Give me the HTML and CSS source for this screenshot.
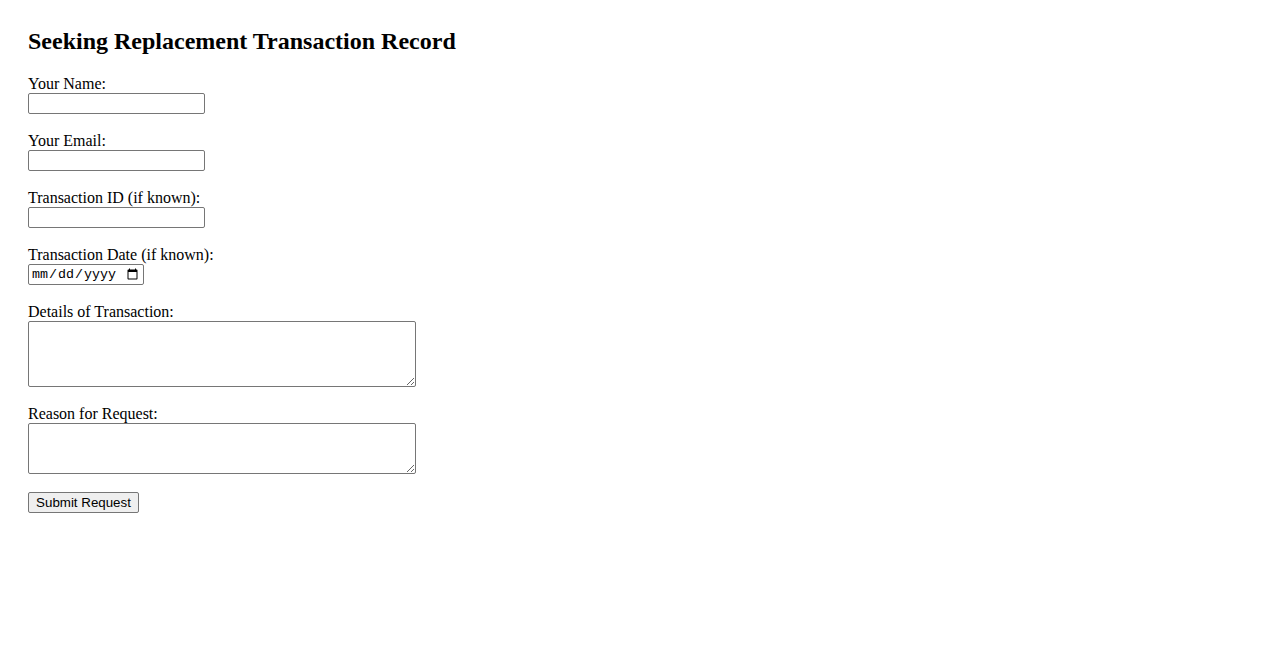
FILE: index.html
```html
<!DOCTYPE html>
<html lang="en">
<head>
<meta charset="utf-8">
<title>Seeking Replacement Transaction Record</title>
<link rel="stylesheet" href="styles.css">
</head>
<body>
<div class="page">
  <h2 class="title">Seeking Replacement Transaction Record</h2>
  <form class="form">
    <div class="field">
      <label class="label" for="name">Your Name:</label>
      <input class="text-input" type="text" id="name">
    </div>
    <div class="field">
      <label class="label" for="email">Your Email:</label>
      <input class="text-input" type="email" id="email">
    </div>
    <div class="field">
      <label class="label" for="tid">Transaction ID (if known):</label>
      <input class="text-input" type="text" id="tid">
    </div>
    <div class="field">
      <label class="label" for="tdate">Transaction Date (if known):</label>
      <input class="date-input" type="date" id="tdate">
    </div>
    <div class="field">
      <label class="label" for="details">Details of Transaction:</label>
      <textarea class="area area-tall" id="details"></textarea>
    </div>
    <div class="field">
      <label class="label" for="reason">Reason for Request:</label>
      <textarea class="area area-short" id="reason"></textarea>
    </div>
    <div class="field">
      <button class="submit" type="submit">Submit Request</button>
    </div>
  </form>
</div>
</body>
</html>
```
FILE: styles.css
```css
html, body {
  margin: 0;
  padding: 0;
  background: #ffffff;
}
.page {
  padding: 28px;
  font-family: "Liberation Serif", "Times New Roman", serif;
  font-size: 16px;
  color: #000000;
}
.title {
  margin: 0 0 21px 0;
  font-size: 24px;
  line-height: 26px;
  font-weight: bold;
}
.form {
  margin: 0;
}
.field {
  display: flex;
  flex-direction: column;
  align-items: flex-start;
  margin-bottom: 18px;
}
.label {
  display: block;
  line-height: 18px;
  height: 18px;
}
.text-input,
.date-input,
.area {
  box-sizing: border-box;
  margin: 0;
  border: 1px solid #767676;
  border-radius: 2px;
  background: #ffffff;
}
.text-input {
  width: 177px;
  height: 21px;
  padding: 1px 2px;
  font-family: "Liberation Sans", Arial, sans-serif;
  font-size: 13.333px;
}
.date-input {
  width: 116px;
  height: 21px;
  padding: 1px 2px;
  font-family: "Liberation Mono", "DejaVu Sans Mono", monospace;
  font-size: 13.333px;
  color: #000000;
}
.area {
  width: 388px;
  padding: 2px;
  font-family: "Liberation Mono", monospace;
  font-size: 13.333px;
  resize: both;
}
.area-tall {
  height: 66px;
}
.area-short {
  height: 51px;
}
.submit {
  box-sizing: border-box;
  margin: 0;
  width: 111px;
  height: 21px;
  padding: 1px 6px 0;
  border: 1px solid #767676;
  border-radius: 2px;
  background: #efefef;
  color: #000000;
  font-family: "Liberation Sans", Arial, sans-serif;
  font-size: 13.333px;
  line-height: 16px;
}
```
